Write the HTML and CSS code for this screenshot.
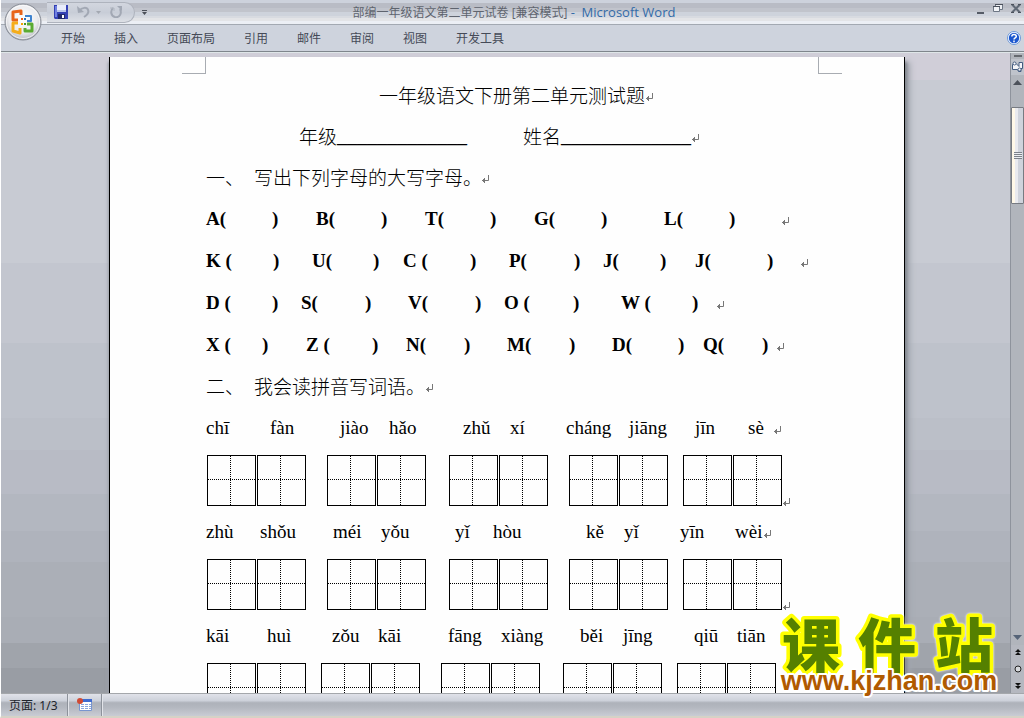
FILE: index.html
```html
<!DOCTYPE html>
<html lang="zh-CN">
<head>
<meta charset="utf-8">
<title>部编一年级语文第二单元试卷 - Microsoft Word</title>
<link rel="stylesheet" href="styles.css">
</head>
<body>
<svg class="defs" aria-hidden="true">
  <symbol id="ret" viewBox="0 0 8 8"><path d="M7.500 0v5.500H1M3.500 3v5M2.500 4v3M1.500 5v1" fill="none" stroke="#777"/></symbol>
</svg>
<div class="app">
  <header class="titlebar">
    <div class="quick">
      <button type="button" aria-label="保存"><svg width="14" height="14" viewBox="0 0 14 14"><path d="M0 0h14v14H1L0 13z" fill="#3340b4"/><path d="M1 1h2v11H1z" fill="#7080e0"/><path d="M3 0h9v7H3z" fill="#e8ecfa"/><path d="M3 5h9v2H3z" fill="#b8c4ec"/><path d="M4 9h7v5H4z" fill="#20286c"/><path d="M8 10h2v3H8z" fill="#fff"/></svg></button>
      <button type="button" class="undo" aria-label="撤销"><svg width="13" height="12" viewBox="0 0 13 12"><path d="M0 0l1 7 6-1z" fill="#a2a8b4"/><path d="M2 5c3-4 8-4 9-1 1 2-1 5-4 7" fill="none" stroke="#a2a8b4" stroke-width="2"/></svg></button>
      <button type="button" class="drop" aria-label="撤销列表"><svg width="5" height="3" viewBox="0 0 5 3"><path d="M0 0h5L2.500 3z" fill="#a3a8b1"/></svg></button>
      <button type="button" aria-label="重复"><svg width="13" height="12" viewBox="0 0 13 12"><path d="M3 2C0 5 1 10 5 11c5 1 7-4 5-8" fill="none" stroke="#a2a8b4" stroke-width="2"/><path d="M7 0h5v5z" fill="#a2a8b4"/><path d="M0 2h4v3" fill="none" stroke="#b0b6c0"/></svg></button>
    </div>
    <button type="button" class="custom" aria-label="自定义快速访问工具栏"><svg width="5" height="5" viewBox="0 0 5 5"><path d="M0 0h5v1H0zM0 2h5L2.500 5z" fill="#4b4f58"/></svg></button>
    <h1 class="caption">部编一年级语文第二单元试卷 [兼容模式] <span>-&nbsp; Microsoft Word</span></h1>
    <div class="window-buttons">
      <button type="button" aria-label="最小化"><svg width="10" height="12" viewBox="0 0 10 12"><path d="M2 10h7v2H2z" fill="#555b66"/></svg></button>
      <button type="button" aria-label="还原"><svg width="10" height="10" viewBox="0 0 10 10"><path d="M2.500 6V1.500h7v5H7" fill="#eceef2" stroke="#6d7684"/><path d="M.5 3.500h6v5h-6z" fill="#f2f4f7" stroke="#6d7684"/><path d="M2 1h8v1H2zM0 3h7v1H0z" fill="#4b515c"/></svg></button>
      <button type="button" aria-label="关闭"><svg width="10" height="9" viewBox="0 0 10 9"><path d="M1 .5l8 8M9 .5l-8 8" stroke="#606976" stroke-width="2"/><path d="M0 .5h3M7 .5h3M0 8.500h3M7 8.500h3" stroke="#4b515c"/></svg></button>
    </div>
    <button type="button" class="office" aria-label="Office 按钮">
      <svg width="38" height="38" viewBox="0 0 38 38">
        <defs><radialGradient id="orb" cx=".5" cy=".4" r=".6"><stop offset="0" stop-color="#fff"/><stop offset=".65" stop-color="#ececef"/><stop offset="1" stop-color="#b4b7bf"/></radialGradient></defs>
        <circle cx="19" cy="19" r="18" fill="url(#orb)" stroke="#868b95"/>
        <circle cx="19" cy="19" r="16.500" fill="none" stroke="#fff" opacity=".7"/>
        <g fill="none" stroke-width="3" stroke-linejoin="round">
          <path d="M14 17H9V9l8-1v4" stroke="#e8641b"/>
          <path d="M21 13h6v5h-4" stroke="#3f83cf" stroke-width="2"/>
          <path d="M14 20H9v8l7 2v-5" stroke="#f5ad1b"/>
          <path d="M23 21h5v7h-7v-3" stroke="#5bab32"/>
        </g>
        <g fill="#e85b12"><path d="M17 15h2v2h-2z"/><path d="M20 15h2v2h-2z" fill="#2c70bb"/><path d="M17 20h2v2h-2z" fill="#f2a400"/><path d="M20 20h2v2h-2z" fill="#459a28"/></g>
      </svg>
    </button>
  </header>
  <nav class="ribbon" aria-label="功能区">
    <button type="button">开始</button><button type="button">插入</button><button type="button">页面布局</button><button type="button">引用</button><button type="button">邮件</button><button type="button">审阅</button><button type="button">视图</button><button type="button">开发工具</button>
    <button type="button" class="help" aria-label="帮助"><svg width="14" height="14" viewBox="0 0 14 14"><circle cx="7" cy="7" r="6.500" fill="#fff" stroke="#6a97d8"/><circle cx="7" cy="7" r="5.200" fill="#1c57cf"/><path d="M4.800 5.500c0-2.800 4.500-2.600 4.500 0C9.300 7 7 6.900 7 8.600M7 9.600v1.600" fill="none" stroke="#fff" stroke-width="1.500"/></svg></button>
  </nav>
  <div class="workspace">
    <main class="canvas">
      <article class="page">
        <i class="crop crop-left"></i><i class="crop crop-right"></i>
        <h2 class="line title">一年级语文下册第二单元测试题<svg class="ret"><use href="#ret"/></svg></h2>
        <p class="line tokens name"><span>年级</span><span>_____________</span><span>姓名</span><span>_____________</span><svg class="ret"><use href="#ret"/></svg></p>
        <h3 class="line tokens heading first"><span>一、</span><span>写出下列字母的大写字母。</span><svg class="ret"><use href="#ret"/></svg></h3>
        <p class="line tokens letters l1"><span>A(</span><span>)</span><span>B(</span><span>)</span><span>T(</span><span>)</span><span>G(</span><span>)</span><span>L(</span><span>)</span><svg class="ret"><use href="#ret"/></svg></p>
        <p class="line tokens letters l2"><span>K (</span><span>)</span><span>U(</span><span>)</span><span>C (</span><span>)</span><span>P(</span><span>)</span><span>J(</span><span>)</span><span>J(</span><span>)</span><svg class="ret"><use href="#ret"/></svg></p>
        <p class="line tokens letters l3"><span>D (</span><span>)</span><span>S(</span><span>)</span><span>V(</span><span>)</span><span>O (</span><span>)</span><span>W (</span><span>)</span><svg class="ret"><use href="#ret"/></svg></p>
        <p class="line tokens letters l4"><span>X (</span><span>)</span><span>Z (</span><span>)</span><span>N(</span><span>)</span><span>M(</span><span>)</span><span>D(</span><span>)</span><span>Q(</span><span>)</span><svg class="ret"><use href="#ret"/></svg></p>
        <h3 class="line tokens heading second"><span>二、</span><span>我会读拼音写词语。</span><svg class="ret"><use href="#ret"/></svg></h3>
        <p class="line tokens p1"><span>chī</span><span>fàn</span><span>jiào</span><span>hǎo</span><span>zhǔ</span><span>xí</span><span>cháng</span><span>jiāng</span><span>jīn</span><span>sè</span><svg class="ret"><use href="#ret"/></svg></p>
        <div class="boxes"><div><i></i><i></i></div><div><i></i><i></i></div><div><i></i><i></i></div><div><i></i><i></i></div><div><i></i><i></i></div><svg class="ret"><use href="#ret"/></svg></div>
        <p class="line tokens p2"><span>zhù</span><span>shǒu</span><span>méi</span><span>yǒu</span><span>yǐ</span><span>hòu</span><span>kě</span><span>yǐ</span><span>yīn</span><span>wèi</span><svg class="ret"><use href="#ret"/></svg></p>
        <div class="boxes"><div><i></i><i></i></div><div><i></i><i></i></div><div><i></i><i></i></div><div><i></i><i></i></div><div><i></i><i></i></div><svg class="ret"><use href="#ret"/></svg></div>
        <p class="line tokens p3"><span>kāi</span><span>huì</span><span>zǒu</span><span>kāi</span><span>fāng</span><span>xiàng</span><span>běi</span><span>jīng</span><span>qiū</span><span>tiān</span></p>
        <div class="boxes narrow"><div><i></i><i></i></div><div><i></i><i></i></div><div><i></i><i></i></div><div><i></i><i></i></div><div><i></i><i></i></div></div>
      </article>
    </main>
    <aside class="scroll" aria-label="垂直滚动">
      <i class="split"></i>
      <button type="button" class="ruler" aria-label="标尺"><svg width="12" height="12" viewBox="0 0 12 12"><path d="M1.500 3.500h2M5 2.500l3 3V1.500h3.500v6H10v3H7.500l-1-2h-5v-5" fill="#f4f5f8" stroke="#445c80"/><circle cx="3.500" cy="2.500" r="1.500" fill="#fff" stroke="#445c80"/><circle cx="8.500" cy="8.500" r="1.500" fill="#fff" stroke="#445c80"/></svg></button>
      <button type="button" class="arrow" aria-label="向上"><svg width="9" height="5" viewBox="0 0 9 5"><path d="M4.500 0L9 5H0z" fill="#4c515a"/></svg></button>
      <div class="track"><div class="thumb"><i></i></div></div>
      <button type="button" class="arrow" aria-label="向下"><svg width="9" height="5" viewBox="0 0 9 5"><path d="M0 0h9L4.500 5z" fill="#566478"/></svg></button>
      <div class="browse">
        <button type="button" aria-label="上一页"><svg width="6" height="7" viewBox="0 0 6 7"><path d="M3 0l3 3H0zM3 3l3 3H0z" fill="#111"/></svg></button>
        <button type="button" aria-label="选择浏览对象"><svg width="8" height="8" viewBox="0 0 8 8"><circle cx="4" cy="4" r="3" fill="#d6d8dc" stroke="#222"/></svg></button>
        <button type="button" aria-label="下一页"><svg width="6" height="7" viewBox="0 0 6 7"><path d="M3 4L0 1h6zM3 7L0 4h6z" fill="#111"/></svg></button>
      </div>
    </aside>
  </div>
  <svg class="brand" width="240" height="110" viewBox="0 0 240 110" role="img" aria-label="课件站 www.kjzhan.com">
    <g class="brand-name"><text x="40" y="65">课</text><text x="116" y="65">件</text><text x="193" y="65">站</text></g>
    <text class="brand-url" x="118" y="88">www.kjzhan.com</text>
  </svg>
  <footer class="status">
    <button type="button" class="pages">页面: 1/3</button>
    <button type="button" class="macro" aria-label="宏"><svg width="16" height="14" viewBox="0 0 16 14"><path d="M2.500 2.500h12v10h-12z" fill="#fff" stroke="#7895cf"/><path d="M3 1h12v3H3z" fill="#3f6bd0"/><path d="M4 6.500h10M4 8.500h10M4 10.500h10" stroke="#8ba7de" stroke-dasharray="3 1"/><circle cx="3" cy="3" r="3" fill="#d04a34"/></svg></button>
  </footer>
</div>
</body>
</html>
```

FILE: styles.css
```css
* { box-sizing: border-box; }
body { margin: 0; font-family: "Liberation Sans", "Noto Sans CJK SC", sans-serif; font-size: 12px; }
button { border: 0; padding: 0; background: none; color: inherit; font: inherit; display: flex; align-items: center; }
h1, h2, h3, p { margin: 0; font-weight: 400; }
i { display: block; }
svg { display: block; flex: none; }
.defs { position: absolute; width: 0; height: 0; }

.app { position: relative; height: 100vh; display: flex; flex-direction: column; overflow: hidden; border-left: 1px solid #fff; border-bottom: 2px solid #d6d2c6; }

.titlebar { position: relative; flex: none; height: 25px; display: flex; align-items: center; border-bottom: 1px solid #a3a9b2;
  background: linear-gradient(#cdd2dc 0 3px, #b9bcc5 3px 8px, #c1c4cc 8px 12px, #ced3dc 12px 16px, #d8dbe1 16px 18px, #e3e4e7 18px 21px, #eceff5 21px); }
.quick { display: flex; align-items: center; width: 88px; height: 21px; margin-left: 46px; padding-left: 7px; gap: 9px; border: 1px solid #aeb3bd; border-left: 0; border-radius: 0 11px 11px 0; background: linear-gradient(#d2d6df, #c8cdd7 50%, #dde0e6); }
.drop { margin-left: -3px; }
.custom { margin-left: 7px; }
.caption { flex: 1; text-align: center; padding-right: 94px; font-family: "Open Sans", "Noto Sans CJK SC", sans-serif; font-size: 12px; line-height: 18px; color: #5f646e; white-space: nowrap; }
.caption span { font-size: 13px; color: #336ba8; }
.window-buttons { display: flex; align-items: center; gap: 8px; padding: 0 3px 8px 0; }
.office { position: absolute; left: 3px; top: 3px; z-index: 2; }

.ribbon { flex: none; display: flex; align-items: center; gap: 29px; height: 27px; padding-left: 60px; background: #ced3dd; border-bottom: 1px solid #7f868c; color: #454a57; font-family: "Noto Sans CJK SC", sans-serif; line-height: 18px; }
.help { margin-left: auto; margin-right: 3px; }

.workspace { flex: 1; min-height: 0; display: flex; overflow: hidden; border-top: 1px solid #dfe6e8;
  background: linear-gradient(#d0ced8 0 27px, #c8cbd3 27px 210px, #c3c6cf 210px 290px, #bec2cb 290px 365px, #bbbfc8 365px 397px, #b8bbc5 397px 441px, #b3b7c0 441px 478px, #afb3bc 478px 509px, #abafb7 509px 564px, #a9adb5 564px 590px, #a0a4ab 590px 615px, #999da4 615px); }
.canvas { flex: 1; display: flex; justify-content: center; padding: 4px 0 0 3px; overflow: hidden; }
.page { position: relative; flex: none; width: 796px; min-height: 100%; padding: 17px 0 0 96px; border: solid #000; border-width: 0 1px; background: #fefefe; color: #000; font-family: "Liberation Serif", "Noto Sans CJK SC", serif; font-size: 19px; box-shadow: 2px 5px 3px #80858d, 5px 5px 6px #a2a7af, -1px 5px 3px #9ca1aa; }
.crop { position: absolute; top: 0; width: 24px; height: 17px; border-bottom: 1px solid #a8acb2; }
.crop-left { left: 72px; border-right: 1px solid #a8acb2; }
.crop-right { left: 708px; border-left: 1px solid #a8acb2; }

.line { height: 42px; line-height: 42px; font-size: 19px; white-space: nowrap; }
.tokens { display: grid; align-items: center; }
.ret { width: 8px; height: 8px; margin-top: 4px; }
.title, .name, .heading { font-family: "Noto Sans CJK SC", sans-serif; font-weight: 300; }
.title { display: flex; align-items: center; height: 41px; line-height: 41px; padding-left: 173px; }
.name { height: 41px; line-height: 41px; grid-template-columns: 38px 186px 38px 130px 8px; padding-left: 93px; }
.name span:nth-child(even) { font-family: "Liberation Serif", serif; font-size: 20px; }
.heading { height: 41px; line-height: 41px; }
.first { grid-template-columns: 48px 227px 8px; }
.second { grid-template-columns: 48px 171px 8px; }
.letters { height: 43px; line-height: 43px; font-weight: 700; }
.l1 { grid-template-columns: 66px 44px 65px 44px 65px 44px 67px 63px 65px 52px 8px; }
.l2 { height: 42px; line-height: 42px; grid-template-columns: 67px 39px 61px 30px 67px 39px 65px 29px 57px 35px 72px 33px 8px; }
.l3 { height: 42px; line-height: 42px; grid-template-columns: 66px 29px 64px 43px 67px 29px 69px 48px 71px 24px 8px; }
.l4 { height: 41px; line-height: 41px; grid-template-columns: 56px 44px 66px 34px 58px 43px 62px 43px 66px 25px 59px 14px 8px; }
.p1 { grid-template-columns: 64px 70px 49px 74px 47px 56px 63px 66px 53px 25px 8px; }
.p2 { grid-template-columns: 54px 73px 48px 74px 38px 93px 38px 56px 55px 28px 8px; }
.p3 { grid-template-columns: 61px 65px 46px 70px 53px 79px 43px 71px 43px 40px; }

.boxes { display: grid; grid-template-columns: 120px 122px 120px 114px 99px 8px; padding: 6px 0 5px 1px; align-items: end; }
.boxes.narrow { grid-template-columns: 114px 120px 122px 114px 99px; }
.boxes div { display: flex; gap: 1px; }
.boxes i { width: 49px; height: 51px; border: 1px solid #000;
  background: repeating-linear-gradient(90deg, #000 0 1px, transparent 1px 2px) 0 23px / 100% 1px no-repeat, repeating-linear-gradient(#000 0 1px, transparent 1px 2px) 22px 0 / 1px 100% no-repeat; }
.p1, .p2 { margin-bottom: 0; }
.second + .p1 { height: 43px; line-height: 43px; }

.scroll { flex: none; width: 14px; display: flex; flex-direction: column; align-items: center; border-left: 1px solid #8e939c; background: #b1b5bc; }
.split { width: 8px; height: 2px; margin: 2px 0; background: #666a70; }
.ruler { width: 100%; height: 16px; background: #bfc3cb; }
.arrow { justify-content: center; width: 100%; height: 15px; }
.track { flex: 1; width: 100%; padding-top: 17px; }
.thumb { display: flex; align-items: center; justify-content: center; height: 97px; border: 1px solid #777b82; border-radius: 1px; background: linear-gradient(90deg, #fff8e8 0 3px, #e9eaef 3px 6px, #cfd3dc 6px); }
.thumb i { width: 8px; height: 7px; background: repeating-linear-gradient(#7d828a 0 1px, #eceef2 1px 2px); }
.browse { display: flex; flex-direction: column; align-items: center; justify-content: space-around; width: 100%; height: 48px; background: #b5b8c0; }

.brand { position: absolute; right: 13px; bottom: 4px; z-index: 3; }
.brand text { text-anchor: middle; paint-order: stroke; stroke-linejoin: round; }
.brand-name { font: 900 58px "Noto Sans CJK SC", sans-serif; fill: #558000; stroke: #ff0; stroke-width: 7px; filter: drop-shadow(0 0 1px #fff); }
.brand-url { font: 700 27px "Liberation Sans", sans-serif; fill: #b05a00; stroke: #fff; stroke-width: 4px; }

.status { flex: none; display: flex; height: 23px; border-top: 1px solid #a4a7ab; background: linear-gradient(#e0e2e9, #cdd1da 30%, #aeb2ba 40%, #b3b7bf 60%, #c9ccd4); color: #20242c; font-family: "Noto Sans", "Noto Sans CJK SC", sans-serif; }
.status button { border-right: 1px solid #8d929b; box-shadow: 1px 0 #e2e4e9; }
.pages { width: 67px; padding-left: 8px; }
.macro { width: 34px; padding-left: 9px; }
```
